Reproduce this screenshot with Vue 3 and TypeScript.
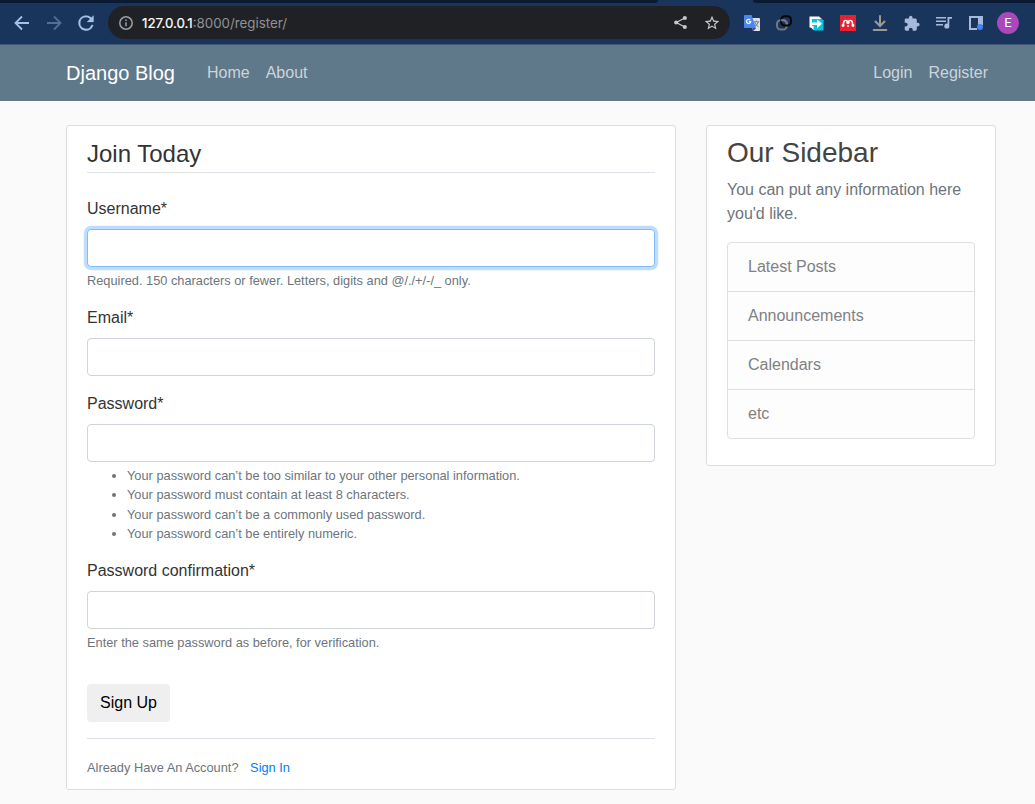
<script setup lang="ts">
interface Field {
  id: string
  label: string
  type: string
  hint?: string
  rules?: string[]
}

const fields: Field[] = [
  {
    id: 'username',
    label: 'Username',
    type: 'text',
    hint: 'Required. 150 characters or fewer. Letters, digits and @/./+/-/_ only.',
  },
  { id: 'email', label: 'Email', type: 'email' },
  {
    id: 'password1',
    label: 'Password',
    type: 'password',
    rules: [
      'Your password can’t be too similar to your other personal information.',
      'Your password must contain at least 8 characters.',
      'Your password can’t be a commonly used password.',
      'Your password can’t be entirely numeric.',
    ],
  },
  {
    id: 'password2',
    label: 'Password confirmation',
    type: 'password',
    hint: 'Enter the same password as before, for verification.',
  },
]

const sidebarItems: string[] = ['Latest Posts', 'Announcements', 'Calendars', 'etc']
</script>

<template>
  <div class="page">
    <div class="tabstrip">
      <span class="tabs-left"></span>
      <span class="tab-active"></span>
      <span class="tabs-right"></span>
    </div>
    <div class="toolbar">
      <div class="nav-icons">
        <svg class="ico" viewBox="0 0 20 20"><path d="M17 10H4.500M10 3.500 3.500 10l6.500 6.500" /></svg>
        <svg class="ico dim" viewBox="0 0 20 20"><path d="M3 10h12.500M10 3.500l6.500 6.500-6.500 6.500" /></svg>
        <svg class="ico solid" viewBox="1.500 1.500 21 21"><path d="M17.650 6.350A7.960 7.960 0 0 0 12 4a8 8 0 1 0 7.730 10h-2.080A6 6 0 1 1 12 6c1.660 0 3.140.69 4.220 1.780L13 11h7V4l-2.350 2.350z" /></svg>
      </div>
      <div class="omnibox">
        <svg class="info" viewBox="0 0 16 16"><circle cx="8" cy="8" r="6.200" /><path d="M8 7.200v4M8 4.500v1.500" /></svg>
        <span class="url"><span class="host">127.0.0.1</span>:8000/register/</span>
        <svg class="share" viewBox="0 0 16 16">
          <path d="M12.600 3.200 3.400 8l9.200 4.800" fill="none" stroke="currentColor" stroke-width="1.300" />
          <circle cx="12.600" cy="3.200" r="2.200" /><circle cx="3.400" cy="8" r="2.200" /><circle cx="12.600" cy="12.800" r="2.200" />
        </svg>
        <svg class="star" viewBox="1 1 22 22"><path d="M22 9.240l-7.190-.62L12 2 9.190 8.630 2 9.240l5.460 4.730L5.820 21 12 17.270 18.180 21l-1.630-7.030L22 9.240zM12 15.400l-3.760 2.270 1-4.280-3.320-2.880 4.380-.38L12 6.100l1.710 4.040 4.380.38-3.320 2.880 1 4.280L12 15.400z" /></svg>
      </div>
      <div class="extensions">
        <svg class="ext" viewBox="0 0 16 16">
          <path d="M6 3h9.200q.8 0 .8.8v11.400q0 .8-.8.8H9z" fill="#dfe1e5" />
          <path d="M9.700 6.800h5.600M12.400 5.600v1.200M14.300 7q-1 3.400-4 4.800M10.800 7.400q1 2.800 3.800 4.600" fill="none" stroke="#717b86" stroke-width="1" />
          <path d="M8.200 13h4L9.300 16z" fill="#3d3fbb" />
          <path d="M.8 0h6.800L12 13H.8Q0 13 0 12.200V.8Q0 0 .8 0z" fill="#4a86ee" />
          <path d="M6.300 5.200A2.100 2.100 0 1 0 6.700 6.700H4.800" fill="none" stroke="#eef3fe" stroke-width="1.300" />
        </svg>
        <svg class="ext" viewBox="0 0 16 16" fill="none" stroke-width="2">
          <rect x="1" y="5.200" width="9.800" height="9.400" rx="3.800" stroke="#77787c" />
          <rect x="5.200" y="1.200" width="9.800" height="9.400" rx="3.800" stroke="#050608" />
          <path d="M4.800 5.200H7q3.800 0 3.800 3.800" stroke="#77787c" />
        </svg>
        <svg class="ext" viewBox="-.5 -.5 16 16">
          <path d="M1.500 1.500h10L15 5v10H5.500l-4-3.500z" fill="#05c5df" />
          <path d="M1 1h9.500L13 3.500H3.500V10L5 12H1z" fill="#fff" />
          <path d="M1.500 10.500 5 14.500v-4z" fill="#fff" />
          <path d="M3.500 7h5V3.800L13.500 8.300l-5 4.500V9.600h-5z" fill="#fff" />
        </svg>
        <svg class="ext" viewBox="0 0 16 16">
          <rect width="16" height="16" fill="#e8202f" />
          <path d="M3.500 10.500V8.500Q3.500 5.400 5.600 5.400T8 7.500Q8.300 5.400 10.400 5.400t2.100 3.100v2" fill="none" stroke="#fff" stroke-width="1.500" />
          <g fill="#fff">
            <circle cx="8" cy="7.600" r="1.700" />
            <circle cx="3" cy="10.500" r="1.400" /><circle cx="13" cy="10.500" r="1.400" />
            <circle cx="8" cy="10.900" r="1" />
          </g>
        </svg>
        <svg class="ext" viewBox="0 0 16 16" fill="none" stroke="#9c9a96" stroke-width="2">
          <path d="M8 1v9.500M3.500 6.500 8 11l4.500-4.500M1.700 15h12.600" stroke-linecap="round" />
        </svg>
        <svg class="ext tint" viewBox="1 0 22.500 22.500"><path d="M20.500 11H19V7c0-1.100-.9-2-2-2h-4V3.500a2.500 2.500 0 0 0-5 0V5H4c-1.100 0-1.990.9-1.990 2v3.800H3.500c1.490 0 2.700 1.210 2.700 2.700s-1.210 2.700-2.700 2.700H2V20c0 1.100.9 2 2 2h3.800v-1.500c0-1.490 1.210-2.700 2.700-2.700s2.700 1.210 2.700 2.700V22H17c1.100 0 2-.9 2-2v-4h1.500a2.500 2.500 0 0 0 0-5z" /></svg>
        <svg class="ext tint" viewBox="0 0 16 16">
          <path d="M0 2h10v1.500H0zM0 5.500h10V7H0zM0 9h7v1.500H0zM11.500 2H16v1.700h-2.700V11a2.500 2.500 0 1 1-1.800-2.300z" />
        </svg>
        <svg class="ext" viewBox="0 0 16 16">
          <path d="M1 1h14v9h-5V3H3v10h6v2H1z" fill="#a8badb" />
          <circle cx="12" cy="12" r="3" fill="#4285f4" />
        </svg>
      </div>
      <span class="avatar">E</span>
    </div>

    <header class="navbar">
      <div class="container nav-row">
        <a class="brand">Django Blog</a>
        <nav class="links">
          <a>Home</a>
          <a>About</a>
        </nav>
        <nav class="links account">
          <a>Login</a>
          <a>Register</a>
        </nav>
      </div>
    </header>

    <main class="container content">
      <section class="card form-card">
        <form @submit.prevent>
          <h1 class="legend">Join Today</h1>
          <div v-for="(f, i) in fields" :key="f.id" class="group">
            <label :for="f.id">{{ f.label }}*</label>
            <input :id="f.id" :type="f.type" class="control" :class="{ focused: i === 0 }" />
            <small v-if="f.hint" class="hint">{{ f.hint }}</small>
            <ul v-if="f.rules" class="hint rules">
              <li v-for="r in f.rules" :key="r">{{ r }}</li>
            </ul>
          </div>
          <button class="btn" type="submit">Sign Up</button>
        </form>
        <div class="signin">
          <small>Already Have An Account? <a>Sign In</a></small>
        </div>
      </section>

      <aside class="card sidebar">
        <h3>Our Sidebar</h3>
        <p>You can put any information here you'd like.</p>
        <ul class="list">
          <li v-for="item in sidebarItems" :key="item">{{ item }}</li>
        </ul>
      </aside>
    </main>
  </div>
</template>

<style>
body {
  margin: 0;
  background: #fafafa;
}
</style>

<style scoped>
* {
  box-sizing: border-box;
}
.page {
  width: 1035px;
  height: 804px;
  overflow: hidden;
  background: #fafafa;
  color: #333;
  font: 16px/1.5 "Liberation Sans", Arial, sans-serif;
}
.tabstrip {
  display: flex;
  height: 3px;
  background: #1a355c;
}
.tabs-left {
  width: 658px;
  background: #0b1a33;
  border-bottom-right-radius: 3px;
}
.tab-active {
  width: 95px;
}
.tabs-right {
  flex: 1;
  background: #0b1a33;
  border-bottom-left-radius: 3px;
}
.toolbar {
  display: flex;
  align-items: center;
  height: 42px;
  padding: 0 16px 2px 12px;
  background: #1a355c;
  border-bottom: 1px solid #3b5573;
}
.nav-icons {
  display: flex;
  gap: 12px;
  width: 96px;
}
.ico {
  width: 20px;
  height: 20px;
  flex: none;
  fill: none;
  stroke: #a8c0e4;
  stroke-width: 1.8;
}
.ico.dim {
  stroke: #546e95;
}
.ico.solid {
  fill: #a8c0e4;
  stroke-width: 0.2;
}
.omnibox {
  display: flex;
  align-items: center;
  width: 622px;
  height: 33px;
  padding: 0 10px;
  border-radius: 17px;
  background: #202124;
}
.info {
  width: 16px;
  height: 16px;
  fill: none;
  stroke: #9aa0a6;
  stroke-width: 1.5;
}
.url {
  flex: 1;
  margin-left: 8px;
  font: 13.33px/20px Inter, sans-serif;
  color: #8f9297;
}
.host {
  color: #fff;
  -webkit-text-stroke: 0.2px #fff;
}
.share {
  width: 15px;
  height: 15px;
  margin-right: 16px;
  fill: #c7c9cc;
  color: #c7c9cc;
}
.star {
  width: 16px;
  height: 16px;
  fill: #c7c9cc;
}
.extensions {
  display: flex;
  gap: 16px;
  margin-left: 14px;
}
.ext {
  width: 16px;
  height: 16px;
}
.tint {
  fill: #a8badb;
}
.avatar {
  width: 22px;
  height: 22px;
  margin-left: auto;
  border-radius: 50%;
  background: #ab47bc;
  color: #fff;
  font: 13px/22px Roboto, sans-serif;
  text-align: center;
}
.navbar {
  height: 56px;
  background: #5f788a;
}
.container {
  width: 930px;
  margin-left: 66px;
}
.nav-row {
  display: flex;
  align-items: center;
  height: 100%;
}
.brand {
  margin-right: 24px;
  font-size: 20px;
  color: #fff;
}
.links {
  display: flex;
}
.links a {
  padding: 8px;
  color: #cbd5db;
}
.account {
  margin-left: auto;
}
.content {
  display: flex;
  align-items: flex-start;
  gap: 30px;
  padding-top: 24px;
}
.card {
  padding: 10px 20px;
  border: 1px solid #ddd;
  border-radius: 3px;
  background: #fff;
}
.form-card {
  width: 610px;
}
.legend {
  margin: 0 0 24px;
  border-bottom: 1px solid #dee2e6;
  font-size: 24px;
  font-weight: 400;
}
.group {
  margin-bottom: 16px;
}
.group label {
  display: block;
  margin-bottom: 8px;
}
.control {
  display: block;
  width: 100%;
  height: 38px;
  padding: 6px 12px;
  border: 1px solid #ced4da;
  border-radius: 4px;
  background: #fff;
  font: inherit;
  outline: 0;
}
.control.focused {
  border-color: #80bdff;
  box-shadow: 0 0 0 3.2px rgba(0, 123, 255, 0.25);
}
.hint {
  display: block;
  margin: 4px 0 0;
  font-size: 12.8px;
  color: #6c757d;
}
.rules {
  padding-left: 40px;
}
.btn {
  display: block;
  height: 38px;
  margin: 32px 0 16px;
  padding: 6px 13px;
  border: 0;
  border-radius: 4px;
  background: #efefef;
  color: #000;
  font: inherit;
}
.signin {
  padding-top: 16px;
  border-top: 1px solid #dee2e6;
  color: #6c757d;
}
.signin small {
  font-size: 12.8px;
}
.signin a {
  margin-left: 8px;
  color: #007bff;
}
.sidebar {
  width: 290px;
}
.sidebar h3 {
  margin: 0 0 8px;
  font-size: 28px;
  font-weight: 400;
  line-height: 1.2;
  color: #444;
}
.sidebar p {
  margin: 0 0 16px;
  color: #6c757d;
}
.list {
  margin: 0 0 16px;
  padding: 0;
  border: 1px solid #dfdfdf;
  border-radius: 4px;
  background: #fdfdfe;
  color: #818182;
  list-style: none;
}
.list li {
  padding: 12px 20px;
}
.list li + li {
  border-top: 1px solid #dfdfdf;
}
</style>
